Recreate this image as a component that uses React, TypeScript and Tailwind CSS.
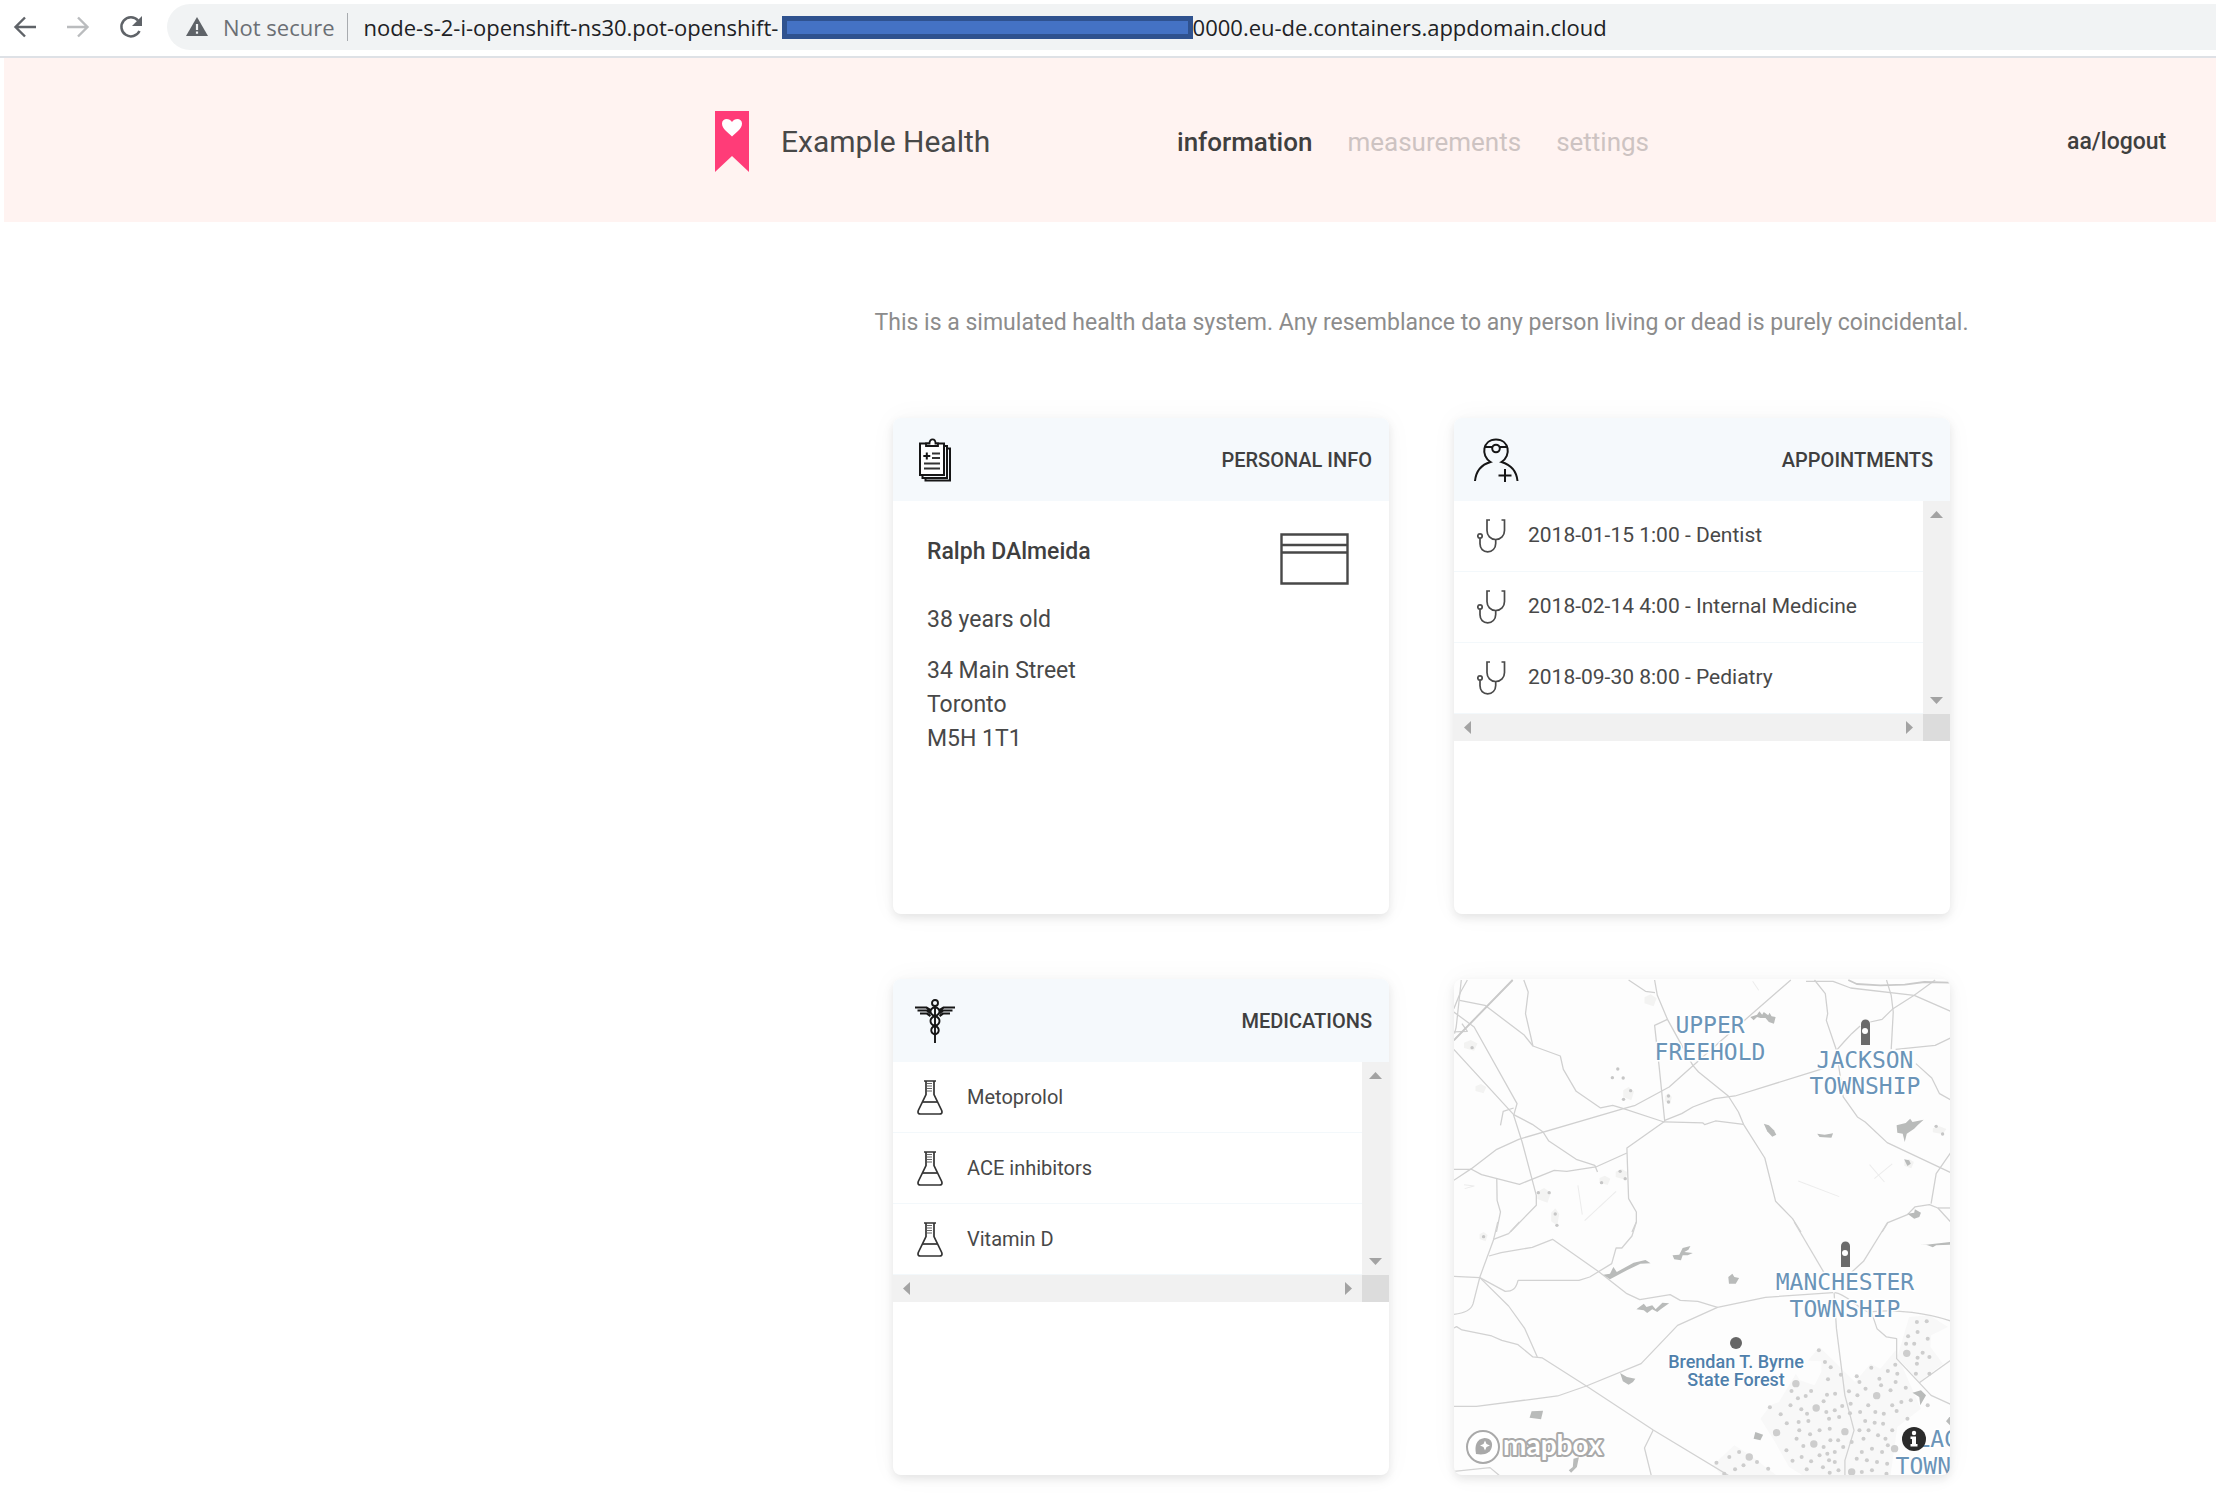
import type { ReactNode } from "react";

function BackIcon({ className }: { className: string }) {
  return (
    <svg width="24" height="24" viewBox="0 0 24 24" fill="none" stroke="currentColor" strokeWidth="2.4" className={className} aria-hidden="true">
      <path d="M23 12H3M12 2.500 2.500 12l9.500 9.500" />
    </svg>
  );
}

function ReloadIcon() {
  return (
    <svg width="24" height="26" viewBox="0 0 24 26" fill="none" aria-hidden="true">
      <path d="M20.500 17A9.500 9.500 0 1 1 19 6.500" stroke="#5f6368" strokeWidth="2.500" />
      <path d="M23 2v10h-10z" fill="#5f6368" />
    </svg>
  );
}

function WarningIcon() {
  return (
    <svg width="22" height="20" viewBox="0 0 22 20" aria-hidden="true">
      <path d="M11 0 22 19H0z" fill="#5f6368" />
      <path d="M11 7v6M11 14.500v2.200" stroke="#f1f3f4" strokeWidth="2.200" />
    </svg>
  );
}

function BrowserBar() {
  return (
    <div className="flex h-[58px] items-start border-b-2 border-[#dee1e6] bg-white pt-1 font-['Open_Sans',sans-serif] text-[22px] leading-[46px]">
      <div className="flex h-[46px] shrink-0 items-center gap-[29px] pl-[13px] text-[#5f6368]">
        <button type="button" aria-label="Back"><BackIcon className="" /></button>
        <button type="button" aria-label="Forward"><BackIcon className="rotate-180 text-[#babcbe]" /></button>
        <button type="button" aria-label="Reload"><ReloadIcon /></button>
      </div>
      <div className="ml-6 flex h-[46px] min-w-0 grow items-center overflow-hidden rounded-l-full bg-[#f1f3f4] pl-[19px] whitespace-nowrap text-[#202124]">
        <WarningIcon />
        <span className="ml-[15px] text-[#6b6f74]">Not secure</span>
        <span className="mr-4 ml-3 h-7 w-px bg-[#a8abaf]" />
        <input
          aria-label="Address"
          readOnly
          value="node-s-2-i-openshift-ns30.pot-openshift-"
          className="w-[418px] shrink-0 bg-transparent outline-none"
        />
        <span className="h-[23px] w-[411px] shrink-0 border-[5px] border-[#2f528f] bg-[#4472c4]" />
        <span>0000.eu-de.containers.appdomain.cloud</span>
      </div>
    </div>
  );
}

function Logo() {
  return (
    <svg width="34" height="62" viewBox="0 0 34 62" aria-hidden="true">
      <path d="M0 0h34v61L17 45 0 61z" fill="#ff3c78" />
      <path d="M17 25.500C13 21.500 7 18 7 12.500 7 6.800 14.500 6.500 17 11c2.500-4.500 10-4.200 10 1.500 0 5.500-6 9-10 13z" fill="#fff" />
    </svg>
  );
}

function SiteHeader() {
  return (
    <header className="ml-1 grid h-[164px] grid-cols-[711fr_462fr_890fr_149fr] items-center bg-[#fff3f1] pt-[3px] text-[#484848]">
      <a href="#home" className="col-start-2 flex items-center gap-8 text-[30px] leading-10">
        <Logo />
        <span>Example Health</span>
      </a>
      <nav className="flex items-center gap-[35px] text-[26px] leading-8 text-[#cdc3c2]">
        <a href="#information" className="font-medium text-[#3f3f3f]">information</a>
        <a href="#measurements">measurements</a>
        <a href="#settings">settings</a>
      </nav>
      <a href="#logout" className="text-[23px] leading-8 font-medium text-[#3f3f3f]">aa/logout</a>
    </header>
  );
}

function ClipboardIcon() {
  return (
    <svg width="34" height="44" viewBox="0 0 34 44" fill="none" stroke="#161616" strokeWidth="2" aria-hidden="true">
      <path d="M7.500 40.500v2H32V10.500h-2" />
      <path d="M4.500 37.500v2.500H29V8h-2.500" />
      <path d="M2 5.500h24V37H2z" fill="#fff" />
      <path d="M8 8V5.500h3.500C11.500 0 17.500 0 17.500 5.500H20V8z" fill="#fff" strokeWidth="1.800" />
      <path d="M8.800 14.500v7M5.300 18h7" />
      <path d="M14 15.500h8M14 20h8M6 25.500h16M6 30.500h16" stroke="#333" />
    </svg>
  );
}

function DoctorIcon() {
  return (
    <svg width="46" height="44" viewBox="0 0 46 44" fill="none" stroke="#161616" strokeWidth="2" aria-hidden="true">
      <path d="M2 43C3 33 9 26.500 17.500 24 7.500 18 9.500 1.500 23 1.500S38.500 18 28.500 24C37 26.500 43.500 33 44.500 43" />
      <path d="M11.500 9h23" />
      <circle cx="23" cy="10.500" r="3.800" fill="#f5f9fc" />
      <path d="M32 31v13M25.500 37.500h13" />
    </svg>
  );
}

function CaduceusIcon() {
  return (
    <svg width="42" height="44" viewBox="0 0 42 44" fill="none" stroke="#161616" strokeWidth="1.900" aria-hidden="true">
      <circle cx="21" cy="4" r="3" />
      <path d="M21 7v37" />
      <path d="M21 8c-6 2-6 7 0 9 6 2 6 8 0 10-5 1.500-5 7 0 8.500" />
      <path d="M21 8c6 2 6 7 0 9-6 2-6 8 0 10 5 1.500 5 7 0 8.500" />
      <path d="M1 8.500h11.500l4.500 3M3.500 11.500h9.500l3.500 2.500M6 14.500h7l3.500 2.500M41 8.500H29.500l-4.500 3M38.500 11.500H29l-3.500 2.500M36 14.500h-7L25.500 17" strokeWidth="2.200" />
    </svg>
  );
}

function StethoscopeIcon() {
  return (
    <svg width="29" height="34" viewBox="0 0 29 34" fill="none" stroke="#4a4a4a" strokeWidth="1.700" aria-hidden="true">
      <path d="M13 1h-3v10.500c0 5 3.500 9 8.700 9s8.800-4 8.800-9V1h-3" />
      <path d="M18.700 20.500v4c0 5-3.500 8.300-8 8.300s-7.700-3.300-7.700-8v-5.300" />
      <circle cx="3" cy="17" r="2.200" />
    </svg>
  );
}

function FlaskIcon() {
  return (
    <svg width="26" height="35" viewBox="0 0 26 35" fill="none" stroke="#333" strokeWidth="1.700" aria-hidden="true">
      <path d="M7 1h12M9 1v13.500L1.300 30.500C.5 33 1.500 34 3.500 34h19c2 0 3-1 2.200-3.500L17 14.500V1" />
      <path d="M6 22h14" />
      <path d="M10 3.500h5M10 6h5M10 8.500h5M10 11h5" strokeWidth="1.200" stroke="#666" />
    </svg>
  );
}

function IdCardIcon() {
  return (
    <svg width="69" height="52" viewBox="0 0 69 52" fill="none" stroke="#484848" strokeWidth="2.400" aria-hidden="true">
      <path d="M1.500 1.500h66v49h-66zM1.500 12h66M1.500 19.500h66" />
    </svg>
  );
}

function Card({ title, icon, children }: { title: string; icon: ReactNode; children: ReactNode }) {
  return (
    <section className="aspect-square overflow-hidden rounded-lg bg-white shadow-[0_4px_10px_rgba(0,0,0,0.09),0_0_28px_rgba(0,0,0,0.04)]">
      <div className="flex h-[83px] items-center justify-between bg-[#f5f9fc] pr-[17px]">
        <span className="flex w-[83px] justify-center">{icon}</span>
        <h2 className="text-xl font-medium text-[#3f3f3f]">{title}</h2>
      </div>
      {children}
    </section>
  );
}

function ScrollArrow({ label, direction }: { label: string; direction: string }) {
  return (
    <button type="button" aria-label={label} className="flex size-[27px] items-center justify-center">
      <svg width="13" height="13" viewBox="0 0 13 13" className={direction} aria-hidden="true">
        <path d="M0 10 6.500 3l6.500 7z" fill="#a3a3a3" />
      </svg>
    </button>
  );
}

function ScrollList({ items, icon, textClass }: { items: string[]; icon: ReactNode; textClass: string }) {
  return (
    <div className="grid grid-cols-[1fr_27px]">
      <ul>
        {items.map((item) => (
          <li key={item} className="flex h-[71px] items-center border-b border-[#f3f8fb] pl-[22px] text-[#484848]">
            <span className="flex w-[30px] justify-center">{icon}</span>
            <span className={textClass}>{item}</span>
          </li>
        ))}
      </ul>
      <div className="flex flex-col justify-between bg-[#f1f1f1]">
        <ScrollArrow label="Scroll up" direction="" />
        <ScrollArrow label="Scroll down" direction="rotate-180" />
      </div>
      <div className="flex justify-between bg-[#f1f1f1]">
        <ScrollArrow label="Scroll left" direction="-rotate-90" />
        <ScrollArrow label="Scroll right" direction="rotate-90" />
      </div>
      <div className="bg-[#dcdcdc]" />
    </div>
  );
}

const northRoads = [
  "M38 235 212 54", "M38 262 215 458 270 487 302 510 318 536 400 592 455 610 463 630", "M60 54 45 195 40 215", "M78 54 58 90 38 140",
  "M38 150 98 195 225 425 215 460 240 540 282 700 282 730 205 810", "M55 115 130 130 245 218 272 252 353 282 362 322 400 388 472 438 508 430 540 440 660 480 775 483 780 488 812 477 895 487",
  "M245 54 258 90 250 155 272 252", "M38 210 78 208 62 185", "M176 490 184 448 215 438", "M38 655 90 620 165 562 230 532 540 440 575 430 675 375 830 235 1035 54",
  "M38 622H90L120 638 232 667 335 625 372 628 458 615 550 573", "M662 478 550 558 555 710 578 750V780L565 810", "M165 650 166 715 176 750 164 810",
  "M555 54 605 88 633 92", "M632 54 640 100 670 172 745 310 762 330 850 402 880 450 895 487 958 588 990 718 1040 770 1065 810", "M670 172 632 190 645 310 662 478",
  "M662 475 712 455 745 435 810 410 870 402 1130 320", "M1105 54 1137 95 1144 155 1140 175 1170 265 1190 405 1232 465 1255 480 1320 542 1508 632",
  "M1080 58H1160L1212 78 1400 100 1508 148", "M1318 54 1332 100 1338 150 1332 262", "M1462 54 1400 100 1335 142 1305 172 1270 180 M1240 192 1215 215 1192 240 1170 265",
  "M1345 262 1462 250 1508 228", "M1405 305 1452 348 1475 395 1508 414", "M1508 572 1465 635 1450 725", "M1305 810 1322 782 1380 758 1402 735 1445 728 1470 738 1508 780", "M1470 738H1508",
];
const northMain = ["M38 235 212 54", "M1205 54 1230 66 1300 70 1372 68 1430 60 1505 62"];
const northFaint = ["M1057 657 1178 704", "M1268 608 1312 660M1335 606 1282 650", "M405 670 418 758M518 688 425 776", "M922 58 940 85", "M68 668 98 672 70 680"];
const southRoads = [
  "M168 0 155 55 115 165 95 245C88 268 60 275 38 277", "M232 0 200 35 155 52", "M142 102 178 92 270 76 330 52 468 150 550 215 588 233 678 218 708 235 760 238 818 256",
  "M578 0 565 42 535 78H518L505 125 440 165 408 175H228C222 200 212 208 190 208L115 167 38 163", "M115 167 200 252 248 320 285 405",
  "M38 318 46 314 62 324 150 342 180 355 228 368 272 405 300 408 430 492 628 624 850 760", "M38 553H105L345 522 430 492 592 425 700 310 818 256 960 226 1160 212",
  "M628 624 602 678 622 760", "M1045 0 1135 155", "M1322 0 1250 118 1210 155", "M1163 212 1170 320 1195 520 1222 625 1195 715V760",
  "M1165 212C1200 215 1230 260 1275 275L1290 320 1318 345 1348 350V410L1450 520 1508 547", "M1270 270C1350 260 1440 275 1508 297", "M1508 415 1415 482", "M38 748 145 737 172 760",
];
const forest = [
  "M1085 416 1120 375 1225 480 1270 425 1300 440 1345 385 1372 450 1420 560 1350 615 1330 760H1070L1030 735 985 655 945 590 975 550 1000 540 1050 455 1062 475 1105 490 1125 450 1125 418z",
  "M1385 285 1445 280 1500 315 1450 340 1448 375 1485 425 1440 460 1415 480 1350 405z", "M805 730 868 670 915 700 992 760H830z",
];
const dots: [number, number][] = [
  [1118,385],[1136,420],[1153,436],[1183,458],[1145,472],[1095,507],[1079,522],[1056,529],[1037,507],[1034,550],[1066,562],[1005,577],[973,556],[1023,604],[1058,600],[1087,597],[1083,575],[1132,538],[1142,518],[1166,515],[1140,570],[1148,590],[1165,565],[1187,552],[1212,545],[1207,508],[1232,520],[1256,500],[1238,480],[1230,463],[1273,437],[1297,470],[1322,447],[1344,428],[1350,455],[1345,480],[1302,490],[1330,505],[1375,497],[1390,535],[1362,540],[1348,567],[1335,550],[1310,575],[1264,550],[1285,570],[1240,570],[1255,597],[1283,602],[1210,574],[1178,585],[1150,620],[1120,625],[1092,637],[1060,625],[1052,650],[1022,685],[1072,672],[1040,716],[1067,705],[1095,718],[1082,742],[1120,700],[1132,675],[1152,655],[1175,655],[1143,695],[1165,690],[1190,675],[1148,715],[1130,736],[1150,752],[1176,745],[1165,720],[1215,660],[1238,625],[1265,625],[1250,650],[1293,640],[1315,650],[1335,625],[1308,605],[1380,590],[1245,690],[1275,680],[1305,690],[1322,670],[1260,715],[1290,720],[1230,710],[1320,725],[1275,745],[1245,750],[1318,755],[1408,300],[1437,298],[1410,330],[1382,343],[1440,350],[1400,365],[1425,392],[1410,407],[1445,405],[1408,425],[1445,455],[1405,455],[1440,550],[1376,365],[882,690],[853,705],[815,722],[895,730],[870,742],[935,720],[968,740],[838,755],
];
const bigDots: [number, number][] = [[1050,485],[1110,558],[1289,521],[993,632],[1195,629],[1103,666],[1215,750],[1378,394],[1342,680],[912,705]];
const northLakes = [
  "M915 165 935 158 942 148 950 158 955 150 968 160 972 152 978 163 990 165 985 185 970 180 960 168 945 168 935 165 925 175z", "M955 485 970 490 985 505 992 518 980 524 965 508z",
  "M1113 515 1135 518 1160 514 1155 527 1120 525z", "M1348 490 1375 483 1388 470 1395 480 1428 473 1410 490 1400 500 1378 515 1372 540 1366 515 1350 512z", "M1370 592 1385 595 1390 605 1380 612z",
  "M1380 755 1400 752 1402 742 1420 752 1415 765 1400 770z",
];
const southLakes = [
  "M480 158 500 155 510 135 520 150 570 122 605 114 620 124 590 125 550 145 500 172z", "M685 100 705 98 715 78 738 72 732 83 720 90 745 93 730 100 715 100 710 115 690 112z",
  "M850 165 862 155 868 165 882 168 872 185 852 185z", "M578 262 600 245 608 255 625 250 635 262 655 242 675 244 650 262 640 270 625 262 610 273 600 265z",
  "M530 453 550 465 575 470 568 480 555 488 538 478z", "M268 568 302 566 296 592 262 587z", "M392 710 408 706 402 735 385 752 378 745 390 735z", "M930 630 953 638 945 655 925 650z",
  "M1415 65 1435 68 1508 60V68L1465 70 1455 76 1440 70z", "M1395 512 1420 505 1435 520 1418 550 1415 525z", "M1508 580 1494 598 1508 612z",
];
const patches: [number, number, number, number][] = [[620,115,18,18],[88,250,20,16],[118,380,16,14],[555,395,16,20],[673,410,10,16],[485,655,16,14],[535,637,18,16],[305,700,20,22],[338,765,12,26],[1475,505,20,12],[1385,605,14,14],[126,824,12,14]];
const specks: [number, number][] = [[523,321],[507,347],[539,348],[540,412],[561,386],[673,402],[673,420],[92,257],[475,662],[530,628],[545,650],[288,692],[320,692],[338,756],[343,790],[126,824],[1465,493],[1484,516]];

function TownPin({ x, y }: { x: number; y: number }) {
  return (
    <g>
      <path d={`M${x - 4} ${y + 25}V${y + 4}a4.500 4.500 0 0 1 9 0V${y + 25}z`} fill="#6b6b6b" />
      <circle cx={x} cy={y + 11} r="3" fill="#fff" />
    </g>
  );
}

function AreaMap() {
  return (
    <section aria-label="Map" className="aspect-square overflow-hidden rounded-lg bg-[#fdfdfd] shadow-[0_4px_10px_rgba(0,0,0,0.09),0_0_28px_rgba(0,0,0,0.04)]">
      <svg viewBox="0 0 496 496" className="block size-full">
        <g transform="translate(-13 -17) scale(.338 .3333)" fill="none" strokeLinejoin="round">
          {patches.map(([x, y, rx, ry]) => <path key={`${x}-${y}`} d={`M${x - rx} ${y - ry / 2}L${x} ${y - ry}L${x + rx} ${y - ry / 3}L${x + rx / 2} ${y + ry}L${x - rx} ${y + ry / 2}z`} fill="#f3f3f2" />)}
          {specks.map(([x, y]) => <circle key={`${x}-${y}`} cx={x} cy={y} r="5" fill="#c6c6c6" />)}
          <g stroke="#d0d0d0" strokeWidth="3.800">{northRoads.map((d) => <path key={d} d={d} />)}</g>
          <g stroke="#cacaca" strokeWidth="5.500">{northMain.map((d) => <path key={d} d={d} />)}</g>
          <g stroke="#ececec" strokeWidth="3">{northFaint.map((d) => <path key={d} d={d} />)}</g>
          <g fill="#b9bbba">{northLakes.map((d) => <path key={d} d={d} />)}</g>
        </g>
        <g transform="translate(-13 243) scale(.338 .3333)" fill="none" strokeLinejoin="round">
          {forest.map((d) => <path key={d} d={d} fill="#f8f8f8" />)}
          <g stroke="#d2d2d2" strokeWidth="3.800">{southRoads.map((d) => <path key={d} d={d} />)}</g>
          <g fill="#cdcdcd">
            {dots.map(([x, y]) => <circle key={`${x}-${y}`} cx={x} cy={y} r="6" />)}
            {bigDots.map(([x, y]) => <circle key={`${x}-${y}`} cx={x} cy={y} r="11" />)}
          </g>
          <g fill="#b9bbba">{southLakes.map((d) => <path key={d} d={d} />)}</g>
        </g>
        <TownPin x={411} y={41} />
        <TownPin x={391} y={263} />
        <circle cx="282" cy="364" r="6" fill="#666" />
        <g className="font-['DejaVu_Sans_Mono',monospace] text-[23px]" fill="#6a94b8" stroke="#fff" strokeWidth="3" strokeLinejoin="round" paintOrder="stroke" textAnchor="middle">
          <text x="256" y="54">UPPER</text>
          <text x="256" y="81">FREEHOLD</text>
          <text x="411" y="89">JACKSON</text>
          <text x="411" y="115">TOWNSHIP</text>
          <text x="391" y="311">MANCHESTER</text>
          <text x="391" y="338">TOWNSHIP</text>
          <text x="497" y="468">LACEY</text>
          <text x="497" y="495">TOWNSHIP</text>
        </g>
        <g className="font-['Roboto',sans-serif] text-[18px] font-medium" fill="#4f7fab" stroke="#fff" strokeWidth="2" paintOrder="stroke" textAnchor="middle">
          <text x="282" y="389">Brendan T. Byrne</text>
          <text x="282" y="407">State Forest</text>
        </g>
        <circle cx="29" cy="468" r="16" fill="#fff" stroke="#a9a9a9" strokeWidth="2" />
        <path d="M22 475c-1.500-8 0-15 8.500-16 6 0 8 4 7.500 8-1 7-7 9.500-16 8z" fill="#a9a9a9" />
        <path d="M31 461.500l1.500 3.500 3.500 1.500-3.500 1.500-1.500 3.500-1.500-3.500-3.500-1.500 3.500-1.500z" fill="#fff" />
        <text x="49" y="476" className="font-['Lato',sans-serif] text-[28px] font-bold" fill="#fff" stroke="#a9a9a9" strokeWidth="4" strokeLinejoin="round" paintOrder="stroke">mapbox</text>
        <circle cx="460" cy="460" r="12" fill="#2b2b2b" />
        <path d="M456.500 457.500h5.500v7.500h1.500v2.500h-7v-2.500h1.500v-5h-1.500z" fill="#fff" />
        <circle cx="460" cy="454" r="2.200" fill="#fff" />
      </svg>
    </section>
  );
}

export default function App() {
  return (
    <div className="min-h-screen bg-white font-['Roboto',sans-serif]">
      <BrowserBar />
      <SiteHeader />
      <main className="flex flex-col items-center pt-[84px] pb-6 pl-[627px]">
        <p className="text-[23px] leading-[34px] text-[#8c8c8c]">
          This is a simulated health data system. Any resemblance to any person living or dead is purely coincidental.
        </p>
        <div className="mt-[78px] grid grid-cols-[496px_496px] gap-x-[65px] gap-y-[65px]">
          <Card title="PERSONAL INFO" icon={<ClipboardIcon />}>
            <div className="flex items-start justify-between pt-8 pr-10 pl-[34px] text-[23px] leading-[34px] text-[#484848]">
              <div className="pt-0.5">
                <h3 className="mb-[34px] font-medium text-[#3f3f3f]">Ralph DAlmeida</h3>
                <p className="mb-[17px]">38 years old</p>
                <address className="not-italic">
                  34 Main Street
                  <br />
                  Toronto
                  <br />
                  M5H 1T1
                </address>
              </div>
              <IdCardIcon />
            </div>
          </Card>
          <Card title="APPOINTMENTS" icon={<DoctorIcon />}>
            <ScrollList
              icon={<StethoscopeIcon />}
              textClass="pl-[22px] text-[21px]"
              items={["2018-01-15 1:00 - Dentist", "2018-02-14 4:00 - Internal Medicine", "2018-09-30 8:00 - Pediatry"]}
            />
          </Card>
          <Card title="MEDICATIONS" icon={<CaduceusIcon />}>
            <ScrollList icon={<FlaskIcon />} textClass="pl-[22px] text-xl" items={["Metoprolol", "ACE inhibitors", "Vitamin D"]} />
          </Card>
          <AreaMap />
        </div>
      </main>
    </div>
  );
}
